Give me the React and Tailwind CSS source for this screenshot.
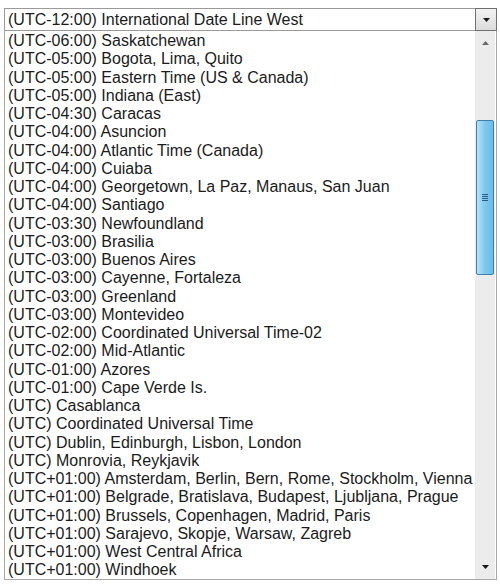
import React from 'react';

const zones = [
  '(UTC-06:00) Saskatchewan',
  '(UTC-05:00) Bogota, Lima, Quito',
  '(UTC-05:00) Eastern Time (US & Canada)',
  '(UTC-05:00) Indiana (East)',
  '(UTC-04:30) Caracas',
  '(UTC-04:00) Asuncion',
  '(UTC-04:00) Atlantic Time (Canada)',
  '(UTC-04:00) Cuiaba',
  '(UTC-04:00) Georgetown, La Paz, Manaus, San Juan',
  '(UTC-04:00) Santiago',
  '(UTC-03:30) Newfoundland',
  '(UTC-03:00) Brasilia',
  '(UTC-03:00) Buenos Aires',
  '(UTC-03:00) Cayenne, Fortaleza',
  '(UTC-03:00) Greenland',
  '(UTC-03:00) Montevideo',
  '(UTC-02:00) Coordinated Universal Time-02',
  '(UTC-02:00) Mid-Atlantic',
  '(UTC-01:00) Azores',
  '(UTC-01:00) Cape Verde Is.',
  '(UTC) Casablanca',
  '(UTC) Coordinated Universal Time',
  '(UTC) Dublin, Edinburgh, Lisbon, London',
  '(UTC) Monrovia, Reykjavik',
  '(UTC+01:00) Amsterdam, Berlin, Bern, Rome, Stockholm, Vienna',
  '(UTC+01:00) Belgrade, Bratislava, Budapest, Ljubljana, Prague',
  '(UTC+01:00) Brussels, Copenhagen, Madrid, Paris',
  '(UTC+01:00) Sarajevo, Skopje, Warsaw, Zagreb',
  '(UTC+01:00) West Central Africa',
  '(UTC+01:00) Windhoek',
];

function Triangle({ up }) {
  return (
    <svg width="7" height="4" viewBox="0 0 7 4">
      <path d={up ? 'M0 4 L3.5 0 L7 4 Z' : 'M0 0 L7 0 L3.5 4 Z'} fill={up ? '#6a6a6a' : '#1a1a1a'} />
    </svg>
  );
}

export default function App() {
  return (
    <div className="w-[500px] h-[584px] bg-white pt-2 pl-1 font-['Liberation_Sans',Arial,sans-serif] text-[16px] text-[#1b1b1b]">
      <div className="w-[493px]">
        {/* closed select */}
        <div className="flex h-[23px] border border-[#9a9a9a] bg-white">
          <div className="flex-1 pl-[3px] leading-[21px] truncate">(UTC-12:00) International Date Line West</div>
          <div className="w-[22px] -my-px -mr-px border border-[#707070] bg-gradient-to-b from-[#f2f2f2] to-[#dcdcdc] flex items-center justify-center">
            <Triangle />
          </div>
        </div>

        {/* open dropdown list */}
        <div className="flex h-[549px] border border-t-0 border-[#a8a8a8] bg-white">
          <div className="flex-1 pl-[3px] pt-[1px] overflow-hidden">
            {zones.map((z) => (
              <div key={z} className="h-[18.25px] leading-[18.25px] whitespace-nowrap">{z}</div>
            ))}
          </div>
          <div className="w-[20px] mr-px bg-[#ececec] flex flex-col items-center">
            <div className="h-[22px] flex items-center justify-center pt-[2px]">
              <Triangle up />
            </div>
            <div className="h-[67px]" />
            <div className="w-[18px] h-[155px] rounded-[2px] border border-[#3d7eb0] bg-gradient-to-r from-[#b9e2f7] via-[#7cc8ee] to-[#6bbde8] flex items-center justify-center">
              <div className="flex flex-col gap-[1px]">
                <div className="w-[6px] h-px bg-[#2c5d86]" />
                <div className="w-[6px] h-px bg-[#2c5d86]" />
                <div className="w-[6px] h-px bg-[#2c5d86]" />
                <div className="w-[6px] h-px bg-[#2c5d86]" />
              </div>
            </div>
            <div className="flex-1" />
            <div className="h-[22px] flex items-center justify-center pb-[3px]">
              <Triangle />
            </div>
          </div>
        </div>
      </div>
    </div>
  );
}
